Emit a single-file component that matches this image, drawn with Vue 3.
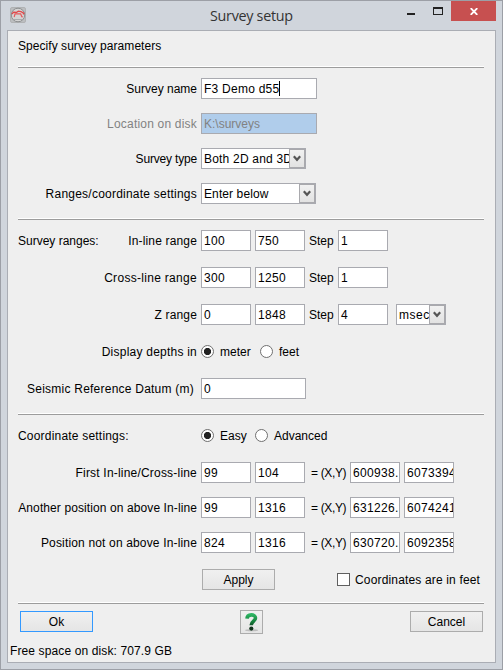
<script setup>
const ranges = [
  { label: 'In-line range', from: '100', to: '750', step: '1', cls: 't-15' },
  { label: 'Cross-line range', from: '300', to: '1250', step: '1', cls: 't-30' },
  { label: 'Z range', from: '0', to: '1848', step: '4', unit: 'msec', cls: 't-15' },
]
const coords = [
  { label: 'First In-line/Cross-line', il: '99', xl: '104', x: '600938.1', y: '6073394.5', cls: 't-20' },
  { label: 'Another position on above In-line', il: '99', xl: '1316', x: '631226.3', y: '6074241.9', cls: 't-10' },
  { label: 'Position not on above In-line', il: '824', xl: '1316', x: '630720.2', y: '6092358.4', cls: 't-15' },
]
</script>

<template>
  <div class="window">
    <header class="titlebar">
      <svg class="app-icon" width="16" height="16" viewBox="0 0 16 16">
        <rect x=".5" y=".5" width="15" height="15" rx="1.5" fill="#bcbec0" stroke="#b0b2b4" />
        <ellipse cx="8" cy="8" rx="6.7" ry="6.8" fill="#d4d4d4" stroke="#8d8f91" />
        <path d="M1.8 7 3.6 5.2 6.3 5.5 8.3 4.2 11 4.6 13.9 6.2 13 7.4" fill="none" stroke="#e0494b" stroke-width="1.3" />
        <path d="M4.6 6.8H11M5 6.8 4.2 10M10.6 6.8 11.8 9.6 12.8 9.8" fill="none" stroke="#e65a5c" stroke-width="1.2" />
        <path d="M4 12.5h8" stroke="#a9abad" />
      </svg>
      <h1 class="title"><span>Survey setup</span></h1>
      <div class="controls">
        <svg class="min" width="8" height="2" viewBox="0 0 8 2"><path d="M0 1h8" stroke="#222" stroke-width="2" /></svg>
        <svg class="max" width="10" height="8" viewBox="0 0 10 8"><path d="M0 0h10v8H0zM1 2v5h8V2z" fill="#222" fill-rule="evenodd" /></svg>
        <span class="close">
          <svg width="8" height="7" viewBox="0 0 8 7"><path d="M.7.2 7.3 6.8M7.3.2.7 6.8" stroke="#fff" stroke-width="1.9" /></svg>
        </span>
      </div>
    </header>

    <main class="body">
      <p class="heading">Specify survey parameters</p>
      <hr class="rule" />

      <section class="group basics">
        <div class="row">
          <span class="label"><span>Survey name</span></span>
          <div class="field wide t-25">F3 Demo d55<i class="caret"></i></div>
        </div>
        <div class="row off">
          <span class="label"><span class="t-20">Location on disk</span></span>
          <div class="field wide t-0">K:\surveys</div>
        </div>
        <div class="row">
          <span class="label"><span class="tight">Survey type</span></span>
          <div class="combo c105"><span class="val t-20">Both 2D and 3D</span><span class="arrow"><svg width="8" height="7" viewBox="0 0 8 7"><path d="M.8 1.2 4 4.8 7.2 1.2" /></svg></span></div>
        </div>
        <div class="row">
          <span class="label"><span class="t-23">Ranges/coordinate settings</span></span>
          <div class="combo c115"><span class="val t-10">Enter below</span><span class="arrow"><svg width="8" height="7" viewBox="0 0 8 7"><path d="M.8 1.2 4 4.8 7.2 1.2" /></svg></span></div>
        </div>
      </section>
      <hr class="rule" />

      <section class="group ranges">
        <div v-for="(r, i) in ranges" :key="r.label" class="row">
          <span v-if="i === 0" class="lead">Survey ranges:</span>
          <span class="label"><span :class="r.cls">{{ r.label }}</span></span>
          <div class="field">{{ r.from }}</div>
          <div class="field">{{ r.to }}</div>
          <span class="step">Step</span>
          <div class="field">{{ r.step }}</div>
          <div v-if="r.unit" class="combo c50"><span class="val t-50">{{ r.unit }}</span><span class="arrow"><svg width="8" height="7" viewBox="0 0 8 7"><path d="M.8 1.2 4 4.8 7.2 1.2" /></svg></span></div>
        </div>
        <div class="row">
          <span class="label"><span class="t-23">Display depths in</span></span>
          <span class="radio on"></span><span class="opt meter">meter</span>
          <span class="radio"></span><span class="opt">feet</span>
        </div>
        <div class="row">
          <span class="label datum"><span class="t-23">Seismic Reference Datum (m)</span></span>
          <div class="field mid">0</div>
        </div>
      </section>
      <hr class="rule" />

      <section class="group coords">
        <div class="row mode">
          <span class="lead t-20">Coordinate settings:</span>
          <span class="label"></span>
          <span class="radio on"></span><span class="opt easy">Easy</span>
          <span class="radio"></span><span class="opt">Advanced</span>
        </div>
        <div v-for="c in coords" :key="c.label" class="row">
          <span class="label"><span :class="c.cls">{{ c.label }}</span></span>
          <div class="field">{{ c.il }}</div>
          <div class="field">{{ c.xl }}</div>
          <span class="xy">= (X,Y)</span>
          <div class="field">{{ c.x }}</div>
          <div class="field">{{ c.y }}</div>
        </div>
        <div class="row apply">
          <button class="btn">Apply</button>
          <label class="check"><span class="box"></span><span class="t-15">Coordinates are in feet</span></label>
        </div>
      </section>
      <hr class="rule" />

      <footer class="actions">
        <button class="btn primary">Ok</button>
        <button class="help" aria-label="Help">
          <svg width="21" height="22" viewBox="0 0 21 22">
            <defs>
              <linearGradient id="q" gradientUnits="userSpaceOnUse" x1="0" y1="3" x2="0" y2="17">
                <stop offset="0" stop-color="#2fb765" /><stop offset=".55" stop-color="#15803c" /><stop offset="1" stop-color="#12331d" />
              </linearGradient>
            </defs>
            <ellipse cx="10.6" cy="19.3" rx="6.5" ry="1" fill="#bdbdbd" />
            <path d="M6 7.6C6.2 2.6 14.5 2.8 14.5 7c0 3.2-4.3 3.2-4.3 7.3" fill="none" stroke="url(#q)" stroke-width="3.6" />
            <circle cx="10.3" cy="17.6" r="2.1" fill="#14351f" />
          </svg>
        </button>
        <button class="btn">Cancel</button>
      </footer>
      <p class="status">Free space on disk: 707.9 GB</p>
    </main>
  </div>
</template>

<style>
body { margin: 0; overflow: hidden; }
</style>

<style scoped>
* { box-sizing: border-box; }
.window {
  width: 503px; height: 670px; padding: 0 6px 6px;
  border: 1px solid #9c9fa6;
  background: #d0d5dc;
  font: 12px/23px "Liberation Sans", Arial, sans-serif;
  color: #000; white-space: nowrap;
}
.titlebar { display: flex; height: 29px; padding-left: 3px; }
.app-icon { margin-top: 6px; flex: none; }
.title {
  flex: 1; margin: 3px 0 0; padding-left: 184px;
  font: 400 15px/22px "Open Sans", "Noto Sans", sans-serif; letter-spacing: -.3px; color: #333;
}
.title span { display: inline-block; transform: scaleX(.955); transform-origin: left; }
.controls { display: flex; }
.min { margin: 12px 18px 0 0; }
.max { margin: 6px 8px 0 0; }
.close { display: flex; align-items: center; justify-content: center; width: 45px; height: 20px; background: #c75050; padding-top: 1px; }

.body { height: 633px; border: 1px solid #aaadb4; background: #efefef; }
.heading { margin: 5px 0 0 10px; height: 30px; line-height: 21px; letter-spacing: .05px; }
.rule { width: 466px; height: 2px; margin: 0 0 0 10px; border: 0; border-top: 1px solid #fff; background: #9c9c9c; }
.group { display: flex; flex-direction: column; }
.basics { gap: 14px; padding: 10px 0 14px; }
.ranges { gap: 16px; padding: 10px 0 14px; }
.coords { gap: 14px; padding: 10px 0 12px; }
.mode { margin-bottom: 2px; }
.row { display: flex; height: 21px; gap: 4px; }
.label { display: flex; justify-content: flex-end; width: 189px; flex: none; }
.lead { width: 80px; margin-left: 10px; margin-right: -10px; }
.lead + .label { width: 105px; }
.datum { padding-right: 3px; }
.off { color: #828282; }
.off .field { background: #b0cdeb; }
.field, .combo { width: 50px; height: 21px; flex: none; border: 1px solid #a9aab0; background: #fff; overflow: hidden; line-height: 21px; padding-left: 2px; letter-spacing: .33px; }
.wide { width: 116px; }
.mid { width: 105px; }
.wide.t-25 { letter-spacing: .25px; }
.wide.t-0 { letter-spacing: 0; }
.caret { display: inline-block; width: 1px; height: 15px; background: #000; vertical-align: -3px; }
.combo { display: flex; }
.val { flex: 1; overflow: hidden; }
.c105 { width: 105px; }
.c115 { width: 115px; }
.c50 { margin-left: 4px; }
.arrow { display: flex; align-items: center; justify-content: center; width: 16px; height: 19px; flex: none; border: 1px solid #a9a9ad; background: linear-gradient(#f1f1f1, #e2e2e2); }
.arrow path { fill: none; stroke: #555; stroke-width: 2.2; }
.step { width: 25px; }
.xy { width: 37px; padding-left: 2px; letter-spacing: -.35px; }
.radio { width: 13px; height: 13px; flex: none; margin-top: 4px; border: 1px solid #707070; border-radius: 50%; background: #fff; }
.on { background: radial-gradient(circle at center, #222 3.2px, #fff 4px); }
.opt { margin-left: 2px; }
.meter { width: 36px; }
.easy { width: 31px; }
.apply { margin-top: 2px; padding-left: 194px; justify-content: space-between; }
.check { display: flex; gap: 5px; width: 147px; margin-right: 11px; }
.box { width: 13px; height: 13px; margin-top: 4px; border: 1px solid #606060; background: #fff; }
.btn, .help { padding: 0; border: 1px solid #acacac; background: linear-gradient(#f0f0f0, #e5e5e5); color: #000; }
.btn { width: 73px; height: 21px; font: inherit; line-height: 18px; padding-top: 1px; }
.primary { border-color: #3399ff; }
.actions { display: flex; justify-content: space-between; align-items: flex-start; height: 24px; padding: 0 12px; margin-top: 6px; }
.actions .btn { margin-top: 1px; }
.help { width: 23px; height: 24px; }
.help svg { display: block; }
.status { margin: 6px 0 0 2px; letter-spacing: .12px; }
.tight { letter-spacing: -.18px; }
.t-10 { letter-spacing: .1px; }
.t-15 { letter-spacing: .16px; }
.t-20 { letter-spacing: .2px; }
.t-23 { letter-spacing: .23px; }
.t-30 { letter-spacing: .3px; }
.t-50 { letter-spacing: .5px; }
</style>
